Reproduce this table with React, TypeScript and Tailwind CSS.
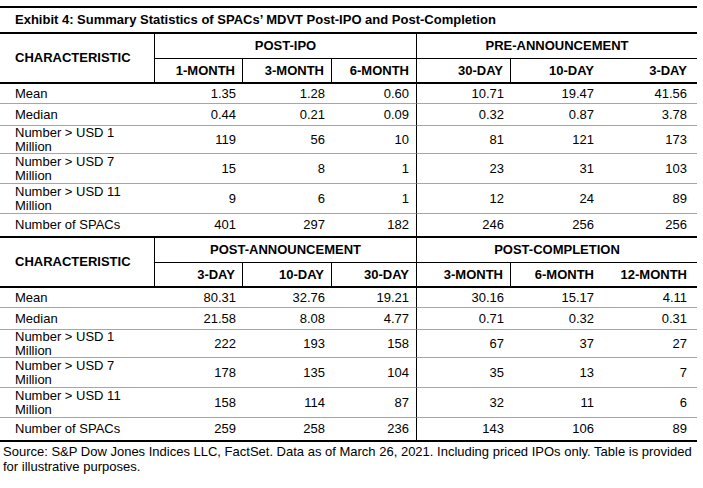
import React from 'react';

type Row = { label: string[]; vals: string[]; h: string };

type Block = {
  groups: [string, string];
  subs: string[];
  rows: Row[];
};

const heights = ['h-[20px]', 'h-[22px]', 'h-[28px]', 'h-[30px]', 'h-[30px]', 'h-[22px]'];

const labels = [['Mean'], ['Median'], ['Number > USD 1', 'Million'], ['Number > USD 7', 'Million'], ['Number > USD 11', 'Million'], ['Number of SPACs']];

const makeRows = (vals: string[][]): Row[] => vals.map((v, i) => ({ label: labels[i], vals: v, h: heights[i] }));

const blocks: Block[] = [
  {
    groups: ['POST-IPO', 'PRE-ANNOUNCEMENT'],
    subs: ['1-MONTH', '3-MONTH', '6-MONTH', '30-DAY', '10-DAY', '3-DAY'],
    rows: makeRows([
      ['1.35', '1.28', '0.60', '10.71', '19.47', '41.56'],
      ['0.44', '0.21', '0.09', '0.32', '0.87', '3.78'],
      ['119', '56', '10', '81', '121', '173'],
      ['15', '8', '1', '23', '31', '103'],
      ['9', '6', '1', '12', '24', '89'],
      ['401', '297', '182', '246', '256', '256'],
    ]),
  },
  {
    groups: ['POST-ANNOUNCEMENT', 'POST-COMPLETION'],
    subs: ['3-DAY', '10-DAY', '30-DAY', '3-MONTH', '6-MONTH', '12-MONTH'],
    rows: makeRows([
      ['80.31', '32.76', '19.21', '30.16', '15.17', '4.11'],
      ['21.58', '8.08', '4.77', '0.71', '0.32', '0.31'],
      ['222', '193', '158', '67', '37', '27'],
      ['178', '135', '104', '35', '13', '7'],
      ['158', '114', '87', '32', '11', '6'],
      ['259', '258', '236', '143', '106', '89'],
    ]),
  },
];

// sub-header cells: which ones carry a line on their right edge
const subBorders = ['border-r border-black', 'border-r border-black', 'border-r border-black', 'border-r border-black', '', ''];

const StatsBlock = ({ block }: { block: Block }) => (
  <div className="grid grid-cols-[155px_88px_89px_85px_94px_90px_96px]">
    {/* header */}
    <div className="row-span-2 flex items-center border-r border-black pl-[15px] font-bold">CHARACTERISTIC</div>
    <div className="col-span-3 flex h-[25px] items-center justify-center border-r border-b border-black font-bold">
      {block.groups[0]}
    </div>
    <div className="col-span-3 flex h-[25px] items-center justify-center border-b border-black font-bold">
      {block.groups[1]}
    </div>
    {block.subs.map((s, i) => (
      <div
        key={s + i}
        className={`flex h-[23px] items-center justify-end font-bold ${i === 5 ? 'pr-[10px]' : 'pr-[7px]'} ${subBorders[i]}`}
      >
        {s}
      </div>
    ))}
    <div className="col-span-7 h-[2px] bg-black" />

    {/* data rows */}
    {block.rows.map((r, ri) => {
      const last = ri === block.rows.length - 1;
      const sep = last ? '' : 'border-b border-[#a6a6a6]';
      return (
        <React.Fragment key={ri}>
          <div className={`flex flex-col justify-center pl-[15px] leading-[14px] ${r.h} ${sep}`}>
            {r.label.map((l) => (
              <span key={l}>{l}</span>
            ))}
          </div>
          {r.vals.map((v, vi) => (
            <div
              key={vi}
              className={`flex items-center justify-end ${vi === 5 ? 'pr-[10px]' : 'pr-[7px]'} ${r.h} ${sep} ${
                vi === 2 ? 'border-r border-r-black' : ''
              }`}
            >
              {v}
            </div>
          ))}
        </React.Fragment>
      );
    })}
  </div>
);

export default function App() {
  return (
    <div className="h-[488px] w-[703px] bg-white pt-[6px] font-[Liberation_Sans,Arial,sans-serif] text-[13px] text-black">
      <div className="w-[697px]">
        <div className="flex h-[28px] items-center border-y-2 border-black pl-[15px] font-bold">
          Exhibit 4: Summary Statistics of SPACs’ MDVT Post-IPO and Post-Completion
        </div>
        <StatsBlock block={blocks[0]} />
        <div className="h-[2px] bg-black" />
        <StatsBlock block={blocks[1]} />
        <div className="h-[2px] bg-black" />
      </div>
      <p className="mt-[2px] pl-[3px] leading-[15px]">
        Source: S&amp;P Dow Jones Indices LLC, FactSet. Data as of March 26, 2021. Including priced IPOs only. Table is provided
        <br />
        for illustrative purposes.
      </p>
    </div>
  );
}
